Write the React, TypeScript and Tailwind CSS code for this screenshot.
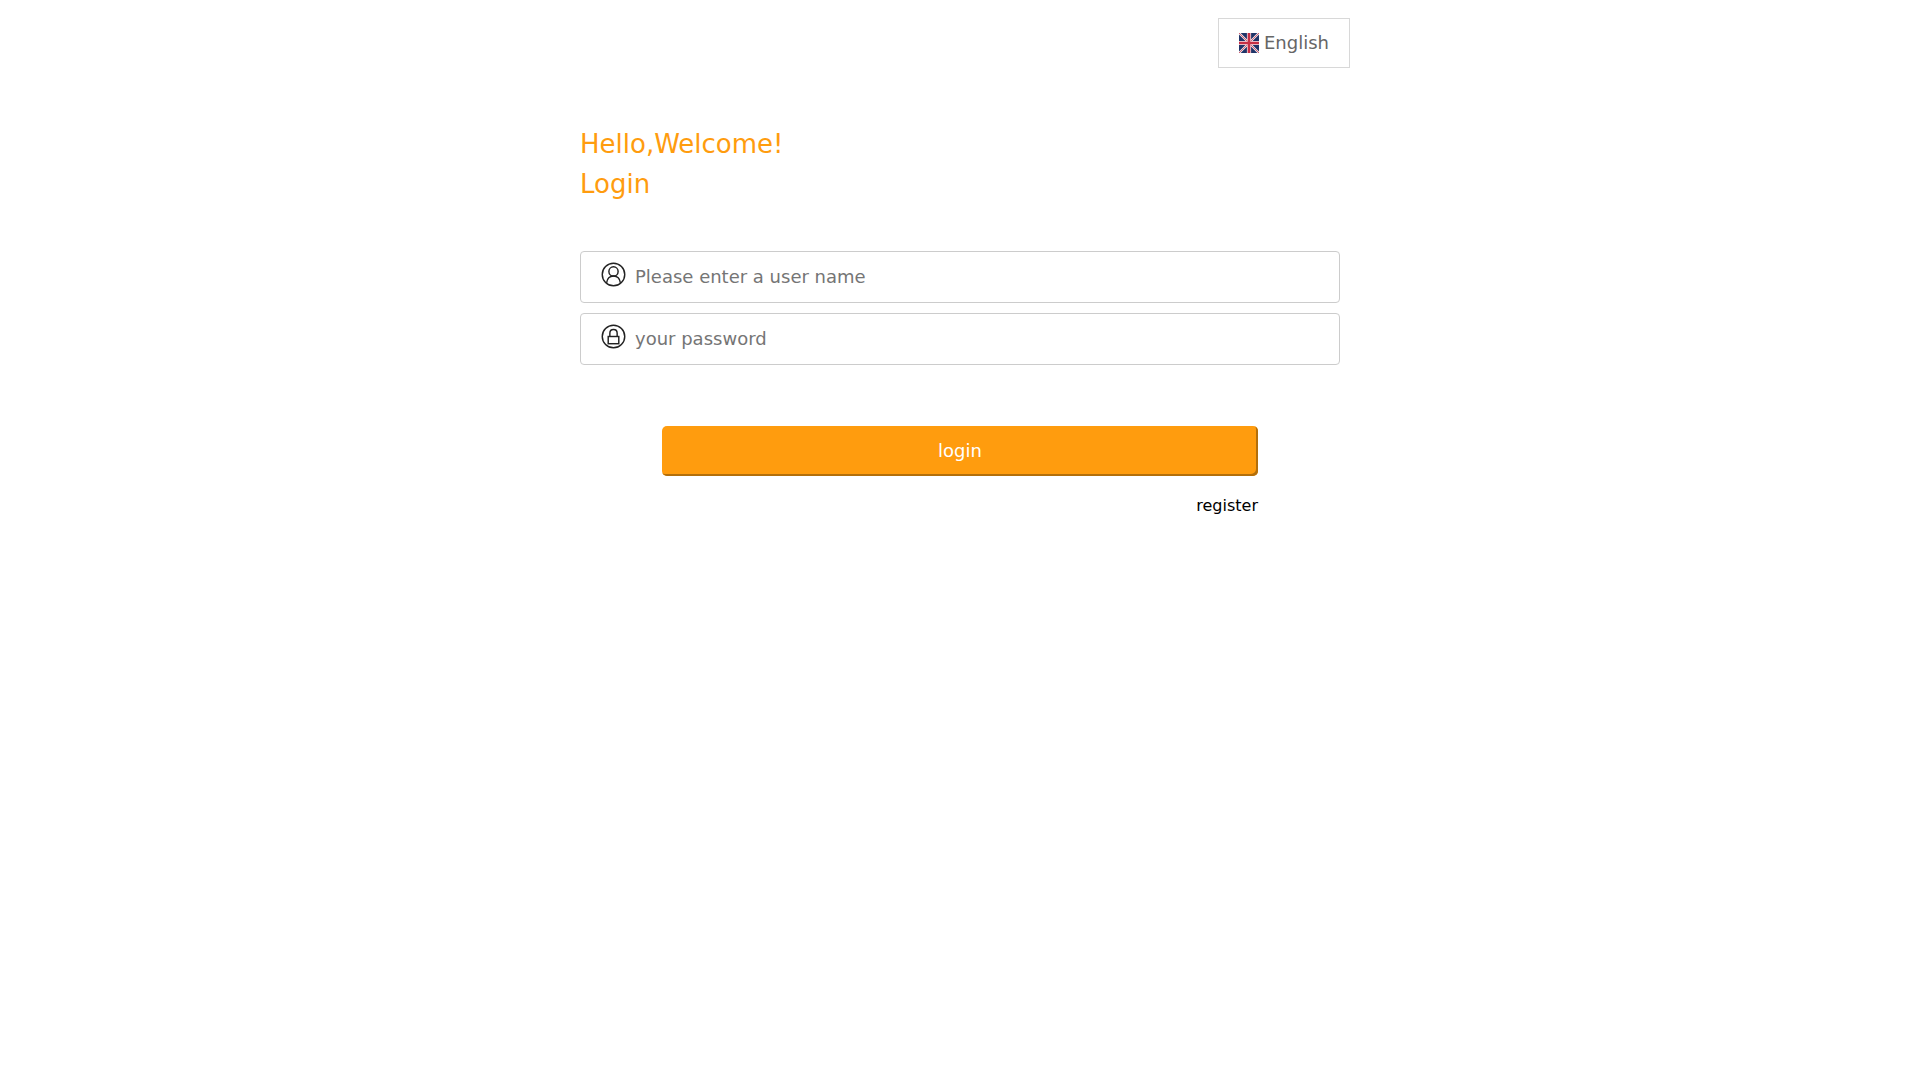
const UserIcon = () => (
  <svg width="25" height="25" viewBox="0 0 26 26" fill="none" stroke="#222" strokeWidth="1.5">
    <circle cx="13" cy="13" r="11.7" />
    <circle cx="13" cy="9.800" r="4.800" />
    <path d="M5.800 21.800c.6-4.400 3.200-7.200 7.200-7.200s6.600 2.800 7.200 7.200" />
  </svg>
);

const LockIcon = () => (
  <svg width="25" height="25" viewBox="0 0 26 26" fill="none" stroke="#222" strokeWidth="1.5">
    <circle cx="13" cy="13" r="11.7" />
    <rect x="7.500" y="13" width="11" height="7.500" />
    <path d="M9.200 13V9.500c0-2.400 1.600-3.800 3.800-3.800s3.800 1.400 3.800 3.800V13" />
  </svg>
);

// union jack, small flag next to the language label
const FlagUK = () => (
  <svg width="20" height="20" viewBox="0 0 21 21">
    <rect width="21" height="21" fill="#1f3468" />
    <path d="M0 0 21 21M21 0 0 21" stroke="#f3e6ea" strokeWidth="2.400" />
    <path d="M0 0 21 21M21 0 0 21" stroke="#c8384e" strokeWidth=".8" />
    <path d="M10.500 0v21M0 10.500h21" stroke="#f3e6ea" strokeWidth="4.400" />
    <path d="M10.500 0v21M0 10.500h21" stroke="#c62f45" strokeWidth="2.800" />
  </svg>
);

const FIELDS = [
  { icon: <UserIcon />, placeholder: "Please enter a user name", type: "text" },
  { icon: <LockIcon />, placeholder: "your password", type: "password" },
];

export default function App() {
  return (
    <div className="min-h-screen bg-white font-['DejaVu_Sans',sans-serif]">
      <div className="mx-auto w-[780px] px-[10px] pt-[18px]">
        <div className="-mr-[10px] flex justify-end">
          <div className="flex h-[50px] w-[132px] items-center justify-center gap-[5px] border border-[#d8d8d8] text-[18px] text-[#666]">
            <FlagUK />
            <span className="-mt-[2px]">English</span>
          </div>
        </div>

        <h1 className="mt-[56px] text-[26px] leading-[40px] font-normal text-[#ff9c0e]">
          Hello,Welcome!
          <br />
          Login
        </h1>

        <div className="mt-[47px] flex flex-col gap-[10px]">
          {FIELDS.map(({ icon, placeholder, type }) => (
            <label
              key={placeholder}
              className="flex h-[52px] items-center rounded-[4px] border border-[#ccc] pb-[6px] pl-[20px]"
            >
              {icon}
              <input
                type={type}
                placeholder={placeholder}
                className="ml-[9px] mt-[4px] flex-1 bg-transparent text-[18px] outline-none placeholder:text-[#757575]"
              />
            </label>
          ))}
        </div>

        <div className="mx-auto mt-[61px] w-[596px]">
          <button className="h-[50px] w-full rounded-[5px] bg-[#ff9c0e] pb-[2px] text-[18px] text-white shadow-[inset_-2px_-2px_0_#b36f0b]">
            login
          </button>
          <div className="mt-[20px] text-right text-[16px] leading-[20px] text-black">register</div>
        </div>
      </div>
    </div>
  );
}
